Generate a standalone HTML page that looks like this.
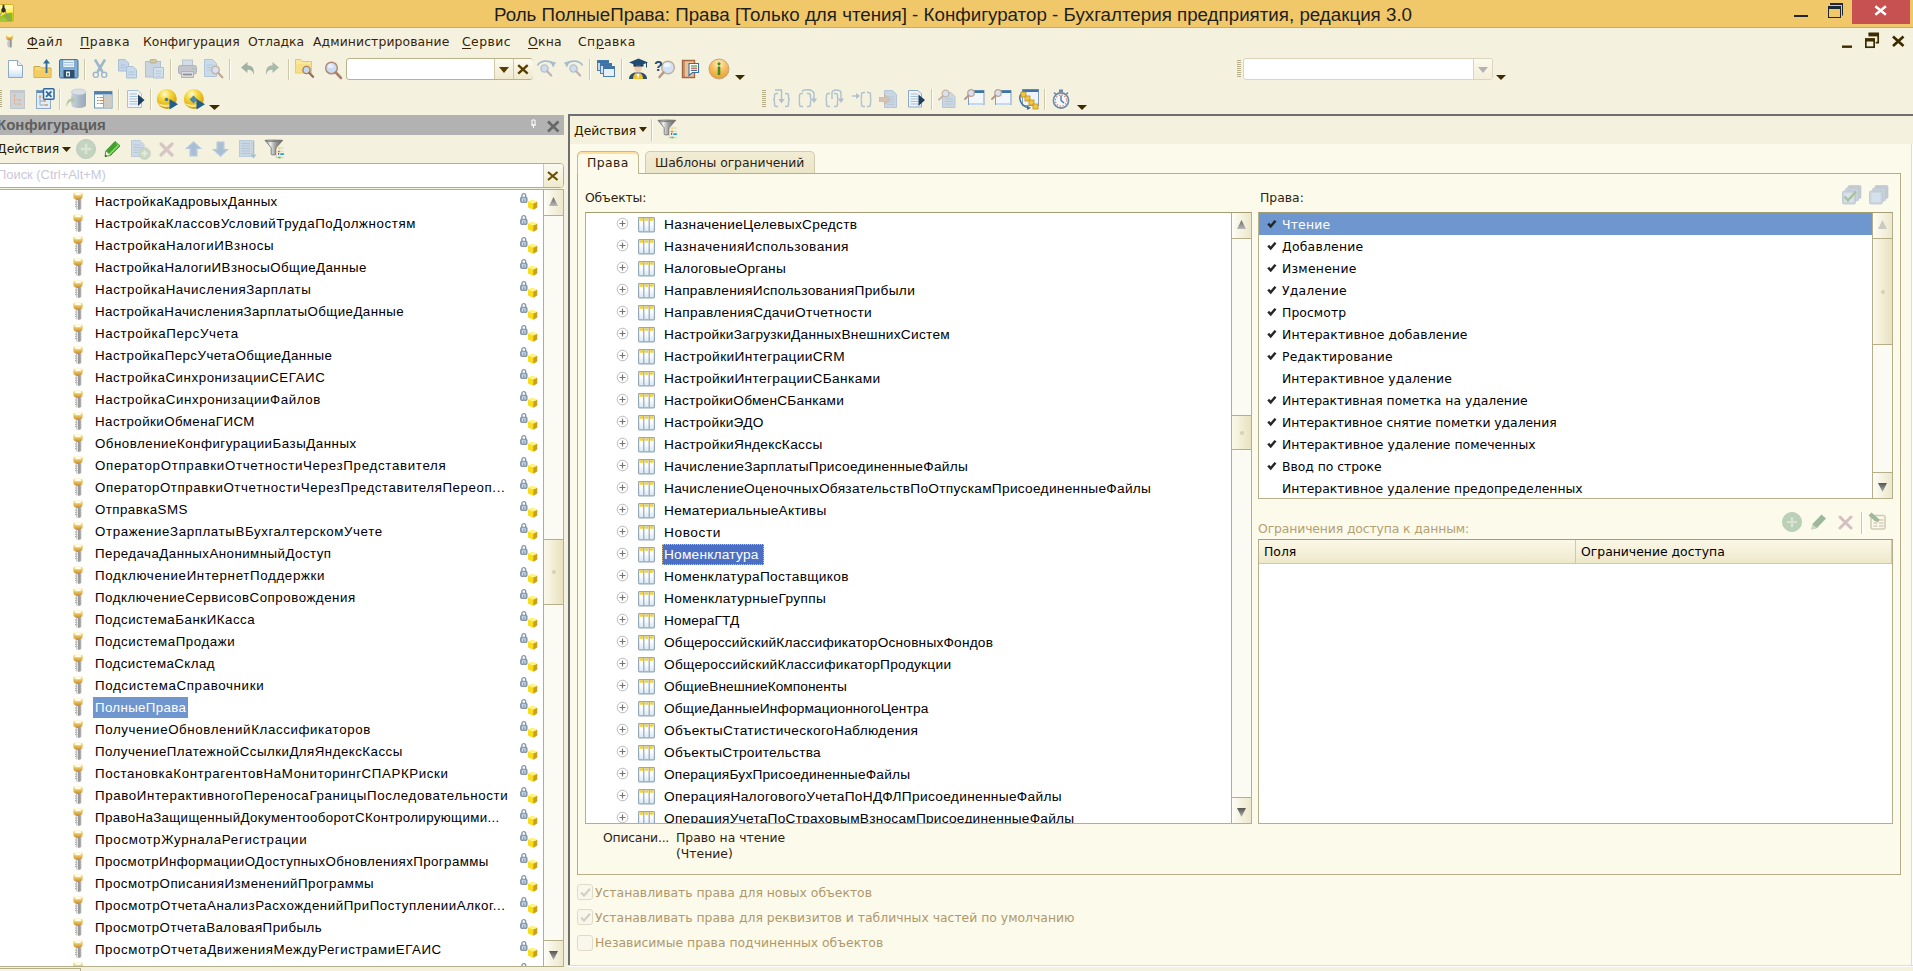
<!DOCTYPE html>
<html lang="ru"><head><meta charset="utf-8"><title>Конфигуратор</title>
<style>
html,body{margin:0;padding:0}
body{width:1913px;height:971px;overflow:hidden;position:relative;background:#F4F2DF;font-family:"Liberation Sans",sans-serif;font-size:14.3px;color:#000;line-height:1}
div,span,svg{position:absolute;box-sizing:border-box}
span{white-space:nowrap}
#defs{width:0;height:0;overflow:hidden}
/* title */
#title{left:0;top:0;width:1913px;height:28px;background:#F0C869;border-bottom:1px solid #CFAC56}
#title .cap{left:0;width:1906px;top:4px;text-align:center;font-size:18.75px;color:#1E1E1E;line-height:22px;height:22px}
#closebtn{left:1852px;top:0;width:58px;height:24px;background:#C75050}
/* menu */
#menu{left:0;top:28px;width:1913px;height:27px;background:#F4F2DF}
#menu span{top:6px;font-family:"DejaVu Sans","Liberation Sans",sans-serif;font-size:12.4px;color:#3A2208;line-height:16px}
#menu u{text-decoration:underline;text-underline-offset:2px}
/* toolbars */
#tb1{left:0;top:55px;width:1913px;height:30px;background:#F4F2DF}
#tb2{left:0;top:85px;width:1913px;height:29px;background:#F4F2DF}
.sep{width:1px;background:#CFC9AA;box-shadow:1px 0 0 #FFFEF6}
.inp{background:#fff;border:1px solid #C4BFA3;border-radius:3px}
/* left panel */
#lhead{left:0;top:115px;width:564px;height:20px;background:#B2B2B2}
#lhead .t{left:-3px;top:2px;font-weight:bold;font-size:15px;color:#5E5E5E;line-height:16px}
#ltb{left:0;top:135px;width:563px;height:28px;background:#F4F2DF}
#lsearch{left:-4px;top:163px;width:568px;height:25px;background:#fff;border:1px solid #B5AE88;border-radius:4px;overflow:hidden}
#lsearch span{left:0px;top:3px;font-size:12.9px;color:#C9C9D9;line-height:16px}
#lsx{left:546px;top:0;width:20px;height:23px;border-left:1px solid #CFC9A8;background:linear-gradient(#FCFBF2,#EFEACF)}
#llist{left:-4px;top:189px;width:568px;height:778px;background:#fff;border:1px solid #B5AE88;overflow:hidden}
.lrow{left:3px;width:543px;height:22px}
.lrow .key{left:72px;top:2px}
.lrow .lt{left:93px;top:1px;height:21px;padding:0 2px;font-size:13.3px;line-height:21px;color:#000}
.lrow .lt.sel{background:#7096CF;color:#fff}
.lrow .lock{left:518px;top:2px}
.vsb{background:#FBFAF3;border-left:1px solid #B5AE88}
.sbtn{left:0;width:100%;height:26px;background:linear-gradient(90deg,#FEFDF8,#F3EFDA 60%,#ECE7CD)}
.sbtn.up{border-bottom:1px solid #B5AE88}
.sbtn.dn{border-top:1px solid #B5AE88}
.sthumb{left:0;width:100%;border-top:1px solid #B5AE88;border-bottom:1px solid #B5AE88;background:linear-gradient(90deg,#FAF8EA,#F1ECD2 55%,#E8E2C0)}
.sthumb:after{content:"";position:absolute;left:50%;top:50%;width:4px;height:4px;margin:-2px 0 0 -2px;border-radius:2px;background:#D6D0B4}
/* splitter */
#split{left:564px;top:115px;width:4px;height:856px;background:#F4F2DF}
/* right */
#rtop{left:568px;top:114px;width:1345px;height:2px;background:#6E6E6E}
#rleft{left:568px;top:114px;width:2px;height:852px;background:#6E6E6E}
#rright{left:1911px;top:116px;width:2px;height:851px;background:#fff;border-left:1px solid #DDDCD8}
#rbot{left:568px;top:965px;width:1345px;height:2px;background:#fff;border-top:1px solid #DDDCD8}
#rform{left:570px;top:116px;width:1341px;height:849px;background:#FCFAEB;font-family:"DejaVu Sans","Liberation Sans",sans-serif;font-size:12.4px}
#rtb{left:0;top:0;width:1343px;height:28px;background:#F4F2DF}
.tab{border:1px solid #C8C2A0;border-bottom:none;border-radius:5px 5px 0 0;font-size:12.4px;line-height:16px;color:#2E1F10}
#tab1{left:7px;top:35px;width:62px;height:23px;background:#FCFAEB;z-index:3;border-color:#C2BB94;box-shadow:inset 0 2px 0 #FFDF9E}
#tab2{left:75px;top:35px;width:170px;height:22px;background:linear-gradient(#F1ECD4,#EBE5C8);border-color:#D2CCAE}
#tabpanel{left:7px;top:57px;width:1324px;height:702px;border:1px solid #B5AE86;background:#FCFAEB}
.lbl{font-size:12.4px;line-height:16px;color:#2E1F10}
.box{background:#fff;border:1px solid #B5AF8A;border-top-color:#A39D74;overflow:hidden}
.trow{left:0;width:640px;height:22px}
.trow .plus{left:30px;top:3px}
.trow .tbl{left:52px;top:3px}
.trow .tt{left:76px;top:1px;height:20px;padding:0 2px;line-height:20px;font-size:13.7px;font-family:"Liberation Sans",sans-serif}
.trow .tt.tsel{background:#4B6FC4;color:#fff;outline:1px dotted #D8C090;outline-offset:-1px;top:0;height:21px;line-height:22px;padding-right:5px}
.rrow{left:0;width:614px;height:22px}
.rrow.rsel{background:#6F97CF;color:#fff}
.rrow .chk{left:8px;top:6px}
.rrow .rt{left:23px;top:4px;line-height:16px;font-size:12.4px}
.th{top:0;height:24px;background:linear-gradient(#FBF8E8,#EEE8CB);border-right:1px solid #CFC9AB;border-bottom:1px solid #CFC9AB;font-size:12.4px;line-height:24px;padding-left:5px}
.cb{width:16px;height:16px;border:1px solid #DEDAC6;border-radius:3px;background:#F9F7EB}
.cb svg{left:2px;top:3px}
.cbl{font-size:12.4px;line-height:16px;color:#B0986A}
#bottom{left:0;top:967px;width:1913px;height:4px;background:#F4F1DE}
#btab{left:-1px;top:968px;width:82px;height:6px;border:1px solid #B5AE88;background:#F8F6EA}
#icons,#icons2{left:0;top:0;width:0;height:0}
.grip{width:4px;background:repeating-linear-gradient(#B8AE86 0 1px,transparent 1px 2px)}

</style></head>
<body>
<svg id="defs" width="0" height="0"><defs>
<symbol id="i-key" viewBox="0 0 12 18"><defs><linearGradient id="gkh" x1="0" y1="0" x2="0" y2="1"><stop offset="0" stop-color="#FFF3B8"/><stop offset=".4" stop-color="#EDCB63"/><stop offset=".8" stop-color="#D59E40"/><stop offset="1" stop-color="#C4853A"/></linearGradient><linearGradient id="gks" x1="0" y1="0" x2="1" y2="0"><stop offset="0" stop-color="#B5B5B5"/><stop offset=".3" stop-color="#E6E6E6"/><stop offset=".55" stop-color="#7C7C7C"/><stop offset=".8" stop-color="#BDBDBD"/><stop offset="1" stop-color="#8A8A8A"/></linearGradient></defs><path d="M4 7.200h5.200v9.800l-1.200 .800h-3l-1-.800z" fill="url(#gks)"/><path d="M3 10h1.200M3 12.300h1.200M3 14.600h1.200" stroke="#9A9A9A" stroke-width="1"/><path d="M1.100 1.700Q1.100 .4 2.500 .4H9.500Q10.900 .4 10.900 1.700L10.600 5Q10.300 7.700 6 7.900Q1.700 7.700 1.400 5Z" fill="url(#gkh)"/><ellipse cx="6" cy="2.100" rx="3.200" ry="1.200" fill="#FFFDEE"/></symbol>
<symbol id="i-lock" viewBox="0 0 20 18"><path d="M3.900 5.500V3.600a1.900 1.900 0 0 1 3.800 0V5.500" fill="none" stroke="#7F96AE" stroke-width="1.300"/><rect x="2.500" y="5.200" width="6.600" height="5.300" rx="1" fill="#90A6BD" stroke="#6B8198" stroke-width=".7"/><rect x="4" y="6.300" width="3.600" height="3" fill="#D3DFEB"/><rect x="5.400" y="7.200" width=".9" height="2" fill="#5E7389"/><path d="M9.900 9.700L14 7.700L19.200 9.700V15.500L15.300 17.700L9.900 15.500Z" fill="#F7DD1E"/><path d="M15.300 11.600L19.200 9.700V15.500L15.300 17.700Z" fill="#C9A21A"/><path d="M9.900 9.700L14 7.700L19.200 9.700L15.300 11.600Z" fill="#FFF384"/></symbol>
<symbol id="i-plus" viewBox="0 0 13 13"><circle cx="6.5" cy="6.5" r="5.3" fill="#fff" stroke="#B9B9B9" stroke-width="1"/><path d="M3.5 6.5h6M6.5 3.5v6" stroke="#777" stroke-width="1.2"/></symbol>
<symbol id="i-tbl" viewBox="0 0 17 16"><defs><linearGradient id="gtb" x1="0" y1="0" x2="0" y2="1"><stop offset=".4" stop-color="#fff"/><stop offset="1" stop-color="#D6E6F5"/></linearGradient></defs><rect x=".6" y=".6" width="15.800" height="14.300" rx=".8" fill="url(#gtb)" stroke="#94A8BA" stroke-width="1.200"/><path d="M5.800 1v13.500M11.200 1v13.500" stroke="#94A8BA" stroke-width="1.200"/><rect x="1.600" y="1.300" width="3.400" height="2.400" fill="#F5D126"/><rect x="6.800" y="1.300" width="3.400" height="2.400" fill="#F5D126"/><rect x="12" y="1.300" width="3.400" height="2.400" fill="#F5D126"/></symbol>
<symbol id="i-chk" viewBox="0 0 11 10"><path d="M1.200 4.700L3.700 7.400L8.500 1.700" fill="none" stroke="#262626" stroke-width="2.500"/></symbol>
<symbol id="i-funnel" viewBox="0 0 21 20"><defs><linearGradient id="gfun" x1="0" y1="0" x2="1" y2="0"><stop offset="0" stop-color="#7A7A7A"/><stop offset=".3" stop-color="#EFEFEF"/><stop offset=".55" stop-color="#A6A6A6"/><stop offset="1" stop-color="#5C5C5C"/></linearGradient></defs><path d="M1 1.300Q9.800 .700 18.700 1.300L12 8.800V15Q12 15.800 11 15.800H8.200Q7.200 15.800 7.200 15V8.800Z" fill="url(#gfun)" stroke="#6A6A6A" stroke-width=".8"/><path d="M1.300 1.700Q9.800 3 18.400 1.700" fill="none" stroke="#7A7A7A" stroke-width="1.100"/><path d="M12.500 10v9" stroke="#D8D5C8" stroke-width="1"/><rect x="13.800" y="8.300" width="2.400" height="1.600" fill="#F7D860"/><rect x="16.200" y="8.300" width="3.300" height="1.600" fill="#DEDCD0"/><rect x="13.800" y="11.700" width="2.400" height="1.600" fill="#C98A52"/><rect x="16.200" y="11.700" width="3.300" height="1.200" fill="#DEDCD0"/><rect x="14" y="14" width="1.200" height="1.800" fill="#5A5E6E"/><rect x="16" y="14.200" width="4.200" height="1.700" rx=".8" fill="#1FA0DC"/><rect x="11.800" y="17.700" width="2.600" height="1.600" fill="#CFCDC2"/><rect x="14.200" y="17.700" width="2.600" height="1.600" fill="#74AE48"/><rect x="16.800" y="17.700" width="2.900" height="1.600" fill="#DEDCD0"/></symbol>
<symbol id="i-addc" viewBox="0 0 20 20"><circle cx="10" cy="10" r="9.600" fill="#C3D3BE" stroke="#B9C8BC" stroke-width=".8"/><path d="M4.800 10h10.400M10 4.800v10.400" stroke="#DCE4D8" stroke-width="2.400"/></symbol>
<symbol id="i-sup" viewBox="0 0 10 9" preserveAspectRatio="none"><defs><linearGradient id="gsu" x1="0" y1="0" x2="0" y2="1"><stop offset="0" stop-color="#666"/><stop offset="1" stop-color="#B8B8B8"/></linearGradient></defs><path d="M5 0L10 9H0z" fill="url(#gsu)"/></symbol>
<symbol id="i-sdn" viewBox="0 0 10 9" preserveAspectRatio="none"><defs><linearGradient id="gsd" x1="0" y1="0" x2="0" y2="1"><stop offset="0" stop-color="#555"/><stop offset="1" stop-color="#B0B0B0"/></linearGradient></defs><path d="M5 9L10 0H0z" fill="url(#gsd)"/></symbol>
<symbol id="i-supd" viewBox="0 0 10 9" preserveAspectRatio="none"><path d="M5 0L10 9H0z" fill="#CBCAC0"/></symbol>
<symbol id="i-up" viewBox="0 0 10 8" preserveAspectRatio="none"><path d="M5 0 L10 8 H0z"/></symbol>
<symbol id="i-dn" viewBox="0 0 10 8" preserveAspectRatio="none"><path d="M5 8 L10 0 H0z"/></symbol>
</defs></svg>

<div id="title"><span class="cap">Роль ПолныеПрава: Права [Только для чтения] - Конфигуратор - Бухгалтерия предприятия, редакция 3.0</span>
<svg style="left:-6px;top:4px" width="20" height="18" viewBox="0 0 20 18"><defs><linearGradient id="gapp" x1="0" y1="0" x2="0" y2="1"><stop offset="0" stop-color="#FFF9CC"/><stop offset=".5" stop-color="#FFEC3A"/><stop offset="1" stop-color="#F2D21E"/></linearGradient></defs><rect x=".5" y=".5" width="19" height="17" rx="1.800" fill="url(#gapp)" stroke="#D6B21E"/><path d="M1 15.500L12 9.500l6.500-1v8.500H1z" fill="#8DB822"/><path d="M1 17L9 12l4 3.500v1.500z" fill="#A7C93A" opacity=".8"/><path d="M9.500 4.500L6 11.500M10 4.500l5.500 12.500" stroke="#9A9A9A" stroke-width="1.100"/><path d="M8.700 .800h1.600l.3 3 1 1.500v2.200l-2.100 1.200-2.100-1.200V5.300l1-1.500z" fill="#2A2D33"/></svg>
<div id="closebtn"></div>
<svg style="left:1790px;top:0" width="123" height="28"><rect x="4" y="15" width="14" height="2" fill="#1E2533"/><path d="M40.5 4.5h12v11" fill="none" stroke="#1E2533" stroke-width="1"/><rect x="40" y="3" width="13" height="2" fill="#1E2533"/><rect x="38.5" y="7.5" width="12" height="10" fill="none" stroke="#1E2533" stroke-width="1"/><rect x="38" y="6" width="13" height="3" fill="#1E2533"/><path d="M85.3 6.3l10.600 8.400M95.900 6.300l-10.600 8.400" stroke="#fff" stroke-width="2.500"/></svg>
</div>

<div id="menu">
<svg style="left:5px;top:6px" width="9" height="14"><use href="#i-key"/></svg>
<span style="left:27px;letter-spacing:.4px"><u>Ф</u>айл</span>
<span style="left:80px;letter-spacing:.5px"><u>П</u>равка</span>
<span style="left:143px;letter-spacing:.02px">Конфигурация</span>
<span style="left:248px">Отладка</span>
<span style="left:313px;letter-spacing:.1px">Администрирование</span>
<span style="left:462px;letter-spacing:.45px"><u>С</u>ервис</span>
<span style="left:528px;letter-spacing:.2px"><u>О</u>кна</span>
<span style="left:578px;letter-spacing:.45px">Сп<u>р</u>авка</span>
<svg style="left:1838px;top:0px" width="72" height="24"><rect x="4" y="17.500" width="10" height="2.400" fill="#3D2B00"/><path d="M30.500 5.300h9.700v9.300h-2.500" fill="none" stroke="#3D2B00" stroke-width="1.700"/><rect x="30.500" y="5.300" width="9.700" height="3.100" fill="#3D2B00"/><rect x="27.850" y="11.200" width="8.300" height="8.000" fill="#F4F2DF" stroke="#3D2B00" stroke-width="1.700"/><rect x="27" y="10.300" width="10" height="3.200" fill="#3D2B00"/><path d="M55 8.500l10.500 9.500M65.500 8.500l-10.500 9.500" stroke="#3D2B00" stroke-width="2.700"/></svg>
</div>

<div id="tb1"></div><div id="tb2"></div>
<div id="icons">
<!-- row1 -->
<svg style="left:7px;top:59px" width="17" height="20" viewBox="0 0 17 20"><defs><linearGradient id="gdoc" x1="0" y1="0" x2="0" y2="1"><stop offset=".45" stop-color="#fff"/><stop offset="1" stop-color="#C5DDF2"/></linearGradient></defs><path d="M1.5 1.5h9l5 5v12h-14z" fill="url(#gdoc)" stroke="#8FA9C2"/><path d="M10.5 1.5v5h5" fill="#E9F1F8" stroke="#8FA9C2"/></svg>
<svg style="left:33px;top:58px" width="19" height="21" viewBox="0 0 19 21"><path d="M1 8.5h6l1.5 1.5h9.5v9.5h-17z" fill="#F6D879" stroke="#C9A545"/><path d="M1 12h17v7.5h-17z" fill="#F2C95A" opacity=".7"/><path d="M13.5 15V4" stroke="#2F6E9C" stroke-width="1.8"/><path d="M10 5.5l3.5-4.5 3.5 4.500z" fill="#2F6E9C"/></svg>
<svg style="left:59px;top:59px" width="20" height="20" viewBox="0 0 20 20"><rect x=".5" y=".5" width="18.500" height="18.500" rx="1.500" fill="#7FAFD6" stroke="#3F6F98"/><rect x="4" y="1" width="11.500" height="7.500" fill="#EAF3FA" stroke="#5E8FB8" stroke-width=".6"/><path d="M5 3.500h9.500M5 6h9.500" stroke="#9CC0DF" stroke-width="1"/><rect x="4.500" y="11" width="11" height="8" fill="#2E506F"/><rect x="7" y="12.500" width="4" height="5" fill="#E8EEF4"/><rect x="8.200" y="14" width="1.600" height="2.500" fill="#2E506F"/></svg>
<div class="sep" style="left:84px;top:59px;height:21px"></div>
<svg style="left:92px;top:59px" width="16" height="20" viewBox="0 0 16 20"><path d="M3 0.500L10.500 13M13 0.500L5.500 13" stroke="#9DB6CE" stroke-width="2.600"/><circle cx="3.800" cy="15.800" r="2.600" fill="#F4F2DF" stroke="#9DB6CE" stroke-width="1.400"/><circle cx="12.200" cy="15.800" r="2.600" fill="#F4F2DF" stroke="#9DB6CE" stroke-width="1.400"/></svg>
<svg style="left:118px;top:59px" width="20" height="20" viewBox="0 0 20 20"><path d="M.5.5h6.500l3.500 3.500v8h-10z" fill="#C3D5E6" stroke="#A9C0D6"/><path d="M8.500 7.500h6.500l3.500 3.500v8h-10z" fill="#C9DAE9" stroke="#A9C0D6"/><path d="M10.500 13h6M10.500 15.500h6M2.500 6h5M2.500 8.500h5" stroke="#A9C0D6" stroke-width=".8"/></svg>
<svg style="left:145px;top:59px" width="20" height="20" viewBox="0 0 20 20"><rect x=".5" y="2.500" width="15" height="15.500" fill="#C9D6E2" stroke="#AFC2D3"/><rect x="5" y=".5" width="6.500" height="3.500" rx="1" fill="#CFC9A8" stroke="#B8B295"/><path d="M8.500 8.500h10v10.500h-10z" fill="#D3E1EE" stroke="#AFC2D3"/><path d="M10.500 12h6M10.500 14.500h6M10.500 17h6" stroke="#AFC2D3" stroke-width=".8"/></svg>
<div class="sep" style="left:170px;top:59px;height:21px"></div>
<svg style="left:178px;top:59px" width="19" height="20" viewBox="0 0 19 20"><rect x="4.500" y="1" width="10" height="6" fill="#D3DDE6" stroke="#B9C3CD"/><rect x=".5" y="6.500" width="18" height="8.500" rx="2" fill="#C3C4CC" stroke="#B0B1BA"/><rect x="3.500" y="12.500" width="12" height="6" fill="#D9D9DE" stroke="#B0B1BA"/><path d="M5 15.500h9" stroke="#8E8E96" stroke-width="1.600"/><rect x="14" y="9" width="2" height="1.300" fill="#9CC79C"/></svg>
<svg style="left:204px;top:59px" width="20" height="20" viewBox="0 0 20 20"><path d="M.5.5h8l4 4v13h-12z" fill="#CADBEA" stroke="#AFC4D8"/><path d="M2.500 6h7M2.500 8.500h5M2.500 11h4" stroke="#AFC4D8" stroke-width=".8"/><circle cx="11.500" cy="11" r="3.800" fill="#D5E3F2" stroke="#C9B3A6" stroke-width="1.500"/><path d="M14.300 14l4 4.300" stroke="#C2A99B" stroke-width="2.400" stroke-linecap="round"/></svg>
<div class="sep" style="left:229px;top:59px;height:21px"></div>
<svg style="left:241px;top:62px" width="14" height="14" viewBox="0 0 14 14"><path d="M0 5.500L6.500 0v3.300c5 0 7 3.500 6.500 10-1-4-2.500-5.500-6.500-5.500V11z" fill="#9FB2A3"/></svg>
<svg style="left:265px;top:62px" width="14" height="14" viewBox="0 0 14 14"><path d="M14 5.500L7.500 0v3.300c-5 0-7 3.500-6.500 10 1-4 2.500-5.500 6.500-5.500V11z" fill="#A9B9AB"/></svg>
<div class="sep" style="left:288px;top:59px;height:21px"></div>
<svg style="left:295px;top:58px" width="20" height="21" viewBox="0 0 20 21"><path d="M.5 1.500h5.500l1.500 2h9v11.500h-16z" fill="#F9E79C" stroke="#E2C766"/><path d="M.5 6h16v9h-16z" fill="#F5DA7A" opacity=".6"/><circle cx="11.500" cy="12" r="3.600" fill="#C5D9F0" stroke="#A87F68" stroke-width="1.400"/><path d="M14.200 14.800l3.800 4" stroke="#9A6B55" stroke-width="2.300" stroke-linecap="round"/></svg>
<svg style="left:324px;top:61px" width="19" height="19" viewBox="0 0 19 19"><circle cx="7.500" cy="7" r="5.800" fill="#C9DCF3" stroke="#B28C78" stroke-width="1.500"/><ellipse cx="6.500" cy="5" rx="3" ry="2" fill="#E6F0FB"/><path d="M11.800 11.500l5.200 5.500" stroke="#A9806B" stroke-width="2.600" stroke-linecap="round"/></svg>
<div class="inp" style="left:346px;top:58px;width:187px;height:22px;border-color:#B9B38B"><div style="left:147px;top:0;width:39px;height:20px;background:linear-gradient(#FCFAEE,#EFE9CE);border-left:1px solid #CFC9A8;border-radius:0 3px 3px 0"></div><div style="left:166px;top:0;width:1px;height:20px;background:#CFC9A8"></div>
<svg style="left:152px;top:8px;fill:#5A3E00" width="10" height="6"><use href="#i-dn"/></svg>
<svg style="left:170px;top:5px" width="12" height="11"><path d="M1.200 1.200l9.500 8.500M10.700 1.200l-9.500 8.500" stroke="#5A3E00" stroke-width="2.400"/></svg></div>
<svg style="left:536px;top:59px" width="21" height="19" viewBox="0 0 21 19"><path d="M1.500 6.500C4 1.500 13 0.500 17.500 5" fill="none" stroke="#A9BCCD" stroke-width="1.800"/><path d="M14 2l6 1.500-3 5z" fill="#A9BCCD"/><circle cx="8.500" cy="9.500" r="3.600" fill="#CFDDED" stroke="#B5BFCC" stroke-width="1.400"/><path d="M11.200 12.300l4 4.200" stroke="#BDB5B5" stroke-width="2.300" stroke-linecap="round"/></svg>
<svg style="left:563px;top:59px" width="21" height="19" viewBox="0 0 21 19"><path d="M19.500 6.500C17 1.500 8 0.500 3.500 5" fill="none" stroke="#A9BCCD" stroke-width="1.800"/><path d="M7 2l-6 1.500 3 5z" fill="#A9BCCD"/><circle cx="10.500" cy="9.500" r="3.600" fill="#CFDDED" stroke="#B5BFCC" stroke-width="1.400"/><path d="M13.200 12.300l4 4.200" stroke="#BDB5B5" stroke-width="2.300" stroke-linecap="round"/></svg>
<div class="sep" style="left:589px;top:59px;height:21px"></div>
<svg style="left:597px;top:60px" width="19" height="18" viewBox="0 0 19 18"><rect x=".5" y=".5" width="11" height="10" fill="#C5D9EC" stroke="#4C7FAD"/><rect x=".5" y=".5" width="11" height="2.500" fill="#3F73A3"/><rect x="3.500" y="3.500" width="11" height="10" fill="#D4E4F2" stroke="#4C7FAD"/><rect x="3.500" y="3.500" width="11" height="2.500" fill="#3F73A3"/><rect x="6.500" y="6.500" width="11" height="10" fill="#E6F0F8" stroke="#4C7FAD"/><rect x="6.500" y="6.500" width="11" height="2.500" fill="#3F73A3"/></svg>
<div class="sep" style="left:621px;top:59px;height:21px"></div>
<svg style="left:628px;top:58px" width="21" height="22" viewBox="0 0 21 22"><path d="M1 21c0-4 3-6 6-6.500h6c3 .5 6 2.500 6 6.500z" fill="#2D4F6E"/><path d="M5 21c0-3 1-5 3-6l2 2 2-2c2 1 3 3 3 6z" fill="#F2C230"/><path d="M8.500 15.500l1.500 5.500 1.500-5.500z" fill="#fff"/><ellipse cx="10" cy="9.500" rx="4" ry="4.800" fill="#F1CDAA"/><path d="M6 8c1-3 7-3 8 0l.5-2.500h-9z" fill="#5A4030"/><path d="M1 4.500L10.500.5 20 4.500 10.500 8z" fill="#1F4A73"/><path d="M5.500 6v2.500h10V6l-5 2z" fill="#173A5C"/><path d="M18.500 4.500v5" stroke="#1F4A73" stroke-width="1"/></svg>
<svg style="left:654px;top:59px" width="22" height="20" viewBox="0 0 22 20"><circle cx="14" cy="8.500" r="6.300" fill="#D3E3F5" stroke="#C6AD99" stroke-width="1.500"/><ellipse cx="13" cy="6" rx="3.500" ry="2.200" fill="#EEF5FC"/><path d="M9.500 13.500l-4 4.500" stroke="#B59A86" stroke-width="2.600" stroke-linecap="round"/><text x="0" y="11.500" font-family="Liberation Sans,sans-serif" font-weight="bold" font-size="14.500" fill="#1F4A73">?</text></svg>
<svg style="left:681px;top:59px" width="19" height="20" viewBox="0 0 19 20"><path d="M1.500 1.500h12v17h-12z" fill="#E8C29C" stroke="#A8683F" stroke-width="1.400"/><path d="M3 1.500v17" stroke="#A8683F" stroke-width="1"/><path d="M8 4.500h9.500v9h-6l-3.500 3z" fill="#fff" stroke="#3E6FA0" stroke-width="1.100"/><path d="M10 7h6" stroke="#4E9A3E" stroke-width="1.200"/><path d="M10 9.200h6" stroke="#D04A3A" stroke-width="1.200"/><path d="M10 11.400h6" stroke="#3E6FA0" stroke-width="1.200"/></svg>
<svg style="left:708px;top:58px" width="22" height="22" viewBox="0 0 22 22"><defs><radialGradient id="ginfo" cx=".5" cy=".25" r=".8"><stop offset="0" stop-color="#FFF0C8"/><stop offset=".45" stop-color="#F8C060"/><stop offset="1" stop-color="#E59A28"/></radialGradient></defs><circle cx="11" cy="11" r="10" fill="url(#ginfo)" stroke="#C9A880" stroke-width="1"/><circle cx="11" cy="5.800" r="1.600" fill="#3E8A1E"/><rect x="9.700" y="8.500" width="2.600" height="8.500" rx=".6" fill="#3E8A1E"/></svg>
<svg style="left:735px;top:75px;fill:#3D2B00" width="10" height="5"><use href="#i-dn"/></svg>
<!-- right search -->
<div class="grip" style="left:1237px;top:60px;height:18px"></div>
<div class="inp" style="left:1243px;top:58px;width:250px;height:22px;border-color:#DAD5BC"><div style="left:229px;top:0;width:19px;height:20px;background:linear-gradient(#FCFAEE,#F3EED8);border-left:1px solid #DAD5BC;border-radius:0 3px 3px 0"></div><svg style="left:234px;top:8px;fill:#B4B4B4" width="10" height="6"><use href="#i-dn"/></svg></div>
<svg style="left:1496px;top:75px;fill:#3D2B00" width="10" height="5"><use href="#i-dn"/></svg>
<!-- row2 left -->
<div class="grip" style="left:-2px;top:90px;height:18px"></div>
<svg style="left:10px;top:90px" width="15" height="19" viewBox="0 0 15 19"><rect x=".5" y=".5" width="14" height="18" fill="#CFD3D5" stroke="#C2C7CA"/><rect x=".5" y=".5" width="14" height="2.500" fill="#C2C9CE"/><path d="M4.500 6v8h4M4.500 10h4" fill="none" stroke="#D9B9A3" stroke-width="1"/><rect x="3.500" y="4.500" width="2.200" height="2" fill="#E0B79B"/><rect x="8.500" y="9" width="2.200" height="2" fill="#E0B79B"/><rect x="8.500" y="13" width="2.200" height="2" fill="#E0B79B"/></svg>
<svg style="left:36px;top:88px" width="19" height="21" viewBox="0 0 19 21"><rect x=".5" y="2.500" width="14" height="18" fill="#E3EDF6" stroke="#8FAAC4"/><rect x=".5" y="2.500" width="14" height="2.500" fill="#5E8DB8"/><path d="M4 9v8h6M4 13h4" fill="none" stroke="#8FAAC4" stroke-width="1"/><rect x="3" y="7.500" width="2.200" height="2" fill="#E09A6B"/><rect x="9.500" y="16" width="2.200" height="2" fill="#E09A6B"/><rect x="7.500" y="12" width="2.200" height="2" fill="#E09A6B"/><rect x="7.500" y=".75" width="10.500" height="10.500" rx="1" fill="#EAF2FA" stroke="#2F6A9E" stroke-width="1.500"/><path d="M10 3.300l5.500 5.500M15.500 3.300l-5.500 5.500" stroke="#2F6A9E" stroke-width="1.900"/></svg>
<div class="sep" style="left:59px;top:89px;height:21px"></div>
<svg style="left:65px;top:88px" width="22" height="21" viewBox="0 0 22 21"><defs><linearGradient id="gcyl" x1="0" y1="0" x2="1" y2="0"><stop offset="0" stop-color="#C9D3DD"/><stop offset=".6" stop-color="#A9B7C5"/><stop offset="1" stop-color="#9AA9B8"/></linearGradient></defs><path d="M6.500 4v13c0 1.800 3.300 3 7.200 3s7.300-1.200 7.300-3V4z" fill="url(#gcyl)"/><ellipse cx="13.750" cy="4" rx="7.250" ry="3" fill="#D7DFE7" stroke="#B5C1CD" stroke-width=".6"/><path d="M1.500 19c-.5-5 1.500-8 5-8.500V8l4 4-4 4v-2.500c-2.500 0-4 2-5 5.500z" fill="#B2C8AE"/></svg>
<svg style="left:94px;top:91px" width="19" height="18" viewBox="0 0 19 18"><rect x=".5" y=".5" width="17.500" height="16.500" fill="#fff" stroke="#6C93B8"/><rect x=".5" y=".5" width="17.500" height="3" fill="#4C7FB0"/><rect x="10" y="4" width="7.500" height="12.500" fill="#CDCBC3"/><path d="M5.500 6.500h3.500M5.500 9.500h3.500M5.500 12.500h3.500" stroke="#E08A4A" stroke-width="1.100"/><path d="M3 6.500h1.500M3 9.500h1.500M3 12.500h1.500" stroke="#6C93B8" stroke-width="1.100"/><path d="M9.500 4v12.500" stroke="#6C93B8" stroke-width=".8"/></svg>
<div class="sep" style="left:118px;top:89px;height:21px"></div>
<svg style="left:127px;top:90px" width="19" height="19" viewBox="0 0 19 19"><path d="M.5.5h10.500l3.500 3.500v13.500h-14z" fill="#EEF4FA" stroke="#A9C0D6"/><path d="M2.500 4h7.500M2.500 6.500h8M2.500 9h8M2.500 11.500h8M2.500 14h8" stroke="#A9C0D6" stroke-width="1"/><path d="M11 4.500l6.500 5.500L11 16z" fill="#1F3F5F"/></svg>
<div class="sep" style="left:150px;top:89px;height:21px"></div>
<svg style="left:156px;top:88px" width="23" height="22" viewBox="0 0 23 22"><defs><radialGradient id="gball" cx=".4" cy=".25" r=".85"><stop offset="0" stop-color="#FFFBD8"/><stop offset=".3" stop-color="#F8DC48"/><stop offset=".7" stop-color="#E2B010"/><stop offset="1" stop-color="#B88A08"/></radialGradient></defs><circle cx="10.800" cy="11" r="10" fill="url(#gball)"/><path d="M2 15c3 5 13 6 17.500-1-3 3-12 4-17.500 1z" fill="#FFF4B0" opacity=".8"/><circle cx="10.500" cy="11.500" r="1.800" fill="#3E7FA8"/><path d="M13.500 11v10.500l8.500-5.200z" fill="#1F5E8E"/></svg>
<svg style="left:183px;top:88px" width="23" height="22" viewBox="0 0 23 22"><circle cx="10.800" cy="11" r="10" fill="url(#gball)"/><path d="M2 15c3 5 13 6 17.500-1-3 3-12 4-17.500 1z" fill="#FFF4B0" opacity=".8"/><path d="M10.500 7.500l4 4-4 4-4-4z" fill="#4E87A8"/><path d="M13.500 11v10.500l8.500-5.200z" fill="#1F5E8E"/></svg>
<svg style="left:209px;top:105px;fill:#3D2B00" width="11" height="5"><use href="#i-dn"/></svg>
</div>

<div id="icons2">
<div class="grip" style="left:762px;top:90px;height:18px"></div>
<svg style="left:772px;top:89px" width="19" height="20" viewBox="0 0 19 20" fill="none" stroke="#AFC0CF" stroke-width="1.400"><path d="M6 4.500h-1.500c-1.500 0-2 1-2 2v2c0 1-.5 2-1.500 2 1 0 1.500 1 1.500 2v3c0 1 .5 2 2 2H6"/><path d="M13 4.500h1.500c1.500 0 2 1 2 2v2c0 1 .5 2 1.500 2-1 0-1.500 1-1.500 2v3c0 1-.5 2-2 2H13"/><path d="M3 1h6.500v10"/><path d="M6.300 10l3.200 4.500 3.200-4.500z" fill="#AFC0CF" stroke="none"/></svg>
<svg style="left:798px;top:89px" width="20" height="20" viewBox="0 0 20 20" fill="none" stroke="#AFC0CF" stroke-width="1.400"><path d="M5 4.500h-1.500c-1.500 0-2 1-2 2v2c0 1-.5 2-1 2 .5 0 1 1 1 2v3c0 1 .5 2 2 2H5"/><path d="M9 4.500h1.500c1.500 0 2 1 2 2v2c0 1 .5 2 1 2-.5 0-1 1-1 2v3c0 1-.5 2-2 2H9"/><path d="M4 2.500c2-2.500 10-2.500 12 1.500v7"/><path d="M12.800 9.500l3.200 4.500 3.200-4.500z" fill="#AFC0CF" stroke="none"/></svg>
<svg style="left:825px;top:89px" width="20" height="20" viewBox="0 0 20 20" fill="none" stroke="#AFC0CF" stroke-width="1.400"><path d="M5 4.500h-1.500c-1.500 0-2 1-2 2v2c0 1-.5 2-1 2 .5 0 1 1 1 2v3c0 1 .5 2 2 2H5"/><path d="M9 4.500h1.500c1.500 0 2 1 2 2v2c0 1 .5 2 1 2-.5 0-1 1-1 2v3c0 1-.5 2-2 2H9"/><path d="M7 10V4c0-4 9-4 9 0v7"/><path d="M12.800 9.500l3.200 4.500 3.200-4.500z" fill="#AFC0CF" stroke="none"/></svg>
<svg style="left:852px;top:89px" width="20" height="20" viewBox="0 0 20 20" fill="none" stroke="#AFC0CF" stroke-width="1.400"><path d="M0 7h5"/><path d="M4 4l4 3-4 3z" fill="#AFC0CF" stroke="none"/><path d="M13 3.500h-1.500c-1.500 0-2 1-2 2v3c0 1-.5 2-1 2 .5 0 1 1 1 2v3c0 1 .5 2 2 2H13"/><path d="M15 3.500h1.500c1.500 0 2 1 2 2v3c0 1 .5 2 1 2-.5 0-1 1-1 2v3c0 1-.5 2-2 2H15"/></svg>
<svg style="left:879px;top:90px" width="19" height="18" viewBox="0 0 19 18"><path d="M5.500.5h8l4 4v13h-12z" fill="#C9D6E2" stroke="#B5C5D4"/><path d="M8 7h7M8 9.500h7M8 12h7M8 14.500h7" stroke="#B5C5D4" stroke-width=".9"/><path d="M0 7.500h5.500V4.500l5.500 5-5.500 5v-3H0z" fill="#D3C3B5" stroke="#C2B0A0" stroke-width=".6"/></svg>
<svg style="left:908px;top:90px" width="18" height="18" viewBox="0 0 18 18"><path d="M.5.500h9.500l3.500 3.500v13h-13z" fill="#EEF4FA" stroke="#8FAAC4"/><path d="M2.500 4h7M2.500 6.500h8M2.500 9h8M2.500 11.500h8M2.500 14h8" stroke="#A9C0D6" stroke-width="1"/><path d="M10.500 4.500l6.500 5.500-6.500 6z" fill="#1F3F5F"/></svg>
<div class="sep" style="left:931px;top:89px;height:21px"></div>
<svg style="left:938px;top:89px" width="19" height="19" viewBox="0 0 19 19"><path d="M4.500 3.500h8.500l4 4v11h-12.500z" fill="#CAD7E3" stroke="#B5C5D4"/><path d="M7 10h8M7 12.500h8M7 15h8" stroke="#B5C5D4" stroke-width=".9"/><circle cx="7.500" cy="4.500" r="3.300" fill="#D9E3EF" stroke="#C8B5AA" stroke-width="1.300"/><path d="M5 7l-4 3.500" stroke="#C8B5AA" stroke-width="2" stroke-linecap="round"/></svg>
<svg style="left:964px;top:88px" width="21" height="18" viewBox="0 0 21 18"><rect x="4.500" y="2.500" width="15.500" height="14" fill="#F3F7FB" stroke="#7FA0C0"/><rect x="4.500" y="2.500" width="15.500" height="2.500" fill="#3F73A3"/><path d="M5 16l14.500 0" stroke="#C5D9EC" stroke-width="2"/><circle cx="7" cy="5" r="3.300" fill="#D5E2F2" stroke="#C2A594" stroke-width="1.300"/><path d="M4.500 7.500l-3.500 3.500" stroke="#B89888" stroke-width="2" stroke-linecap="round"/></svg>
<svg style="left:991px;top:88px" width="21" height="18" viewBox="0 0 21 18"><rect x="4.500" y="2.500" width="15.500" height="14" fill="#F3F7FB" stroke="#7FA0C0"/><rect x="4.500" y="2.500" width="15.500" height="2.500" fill="#3F73A3"/><path d="M5 16l14.500 0" stroke="#C5D9EC" stroke-width="2"/><circle cx="7" cy="5" r="3.300" fill="#D5E2F2" stroke="#C2A594" stroke-width="1.300"/><path d="M4.500 7.500l-3.500 3.500" stroke="#B89888" stroke-width="2" stroke-linecap="round"/></svg>
<svg style="left:1018px;top:88px" width="22" height="22" viewBox="0 0 22 22"><rect x="4.500" y="1.500" width="16" height="16" fill="#EEF4FA" stroke="#7FA0C0"/><rect x="4.500" y="1.500" width="16" height="2.500" fill="#3F73A3"/><path d="M3 6c-3 5 0 12 8 14" fill="none" stroke="#3F73A3" stroke-width="1.500"/><path d="M9 17.500l4 2.500-4 2z" fill="#3F73A3"/><rect x="3" y="4" width="5" height="5" fill="#F5C83A" stroke="#B8902A" stroke-width=".8"/><rect x="7" y="8" width="5" height="5" fill="#F5C83A" stroke="#B8902A" stroke-width=".8"/><rect x="11" y="12" width="5" height="5" fill="#F5C83A" stroke="#B8902A" stroke-width=".8"/><rect x="15" y="16" width="5" height="5" fill="#F5C83A" stroke="#B8902A" stroke-width=".8"/></svg>
<div class="sep" style="left:1044px;top:89px;height:21px"></div>
<svg style="left:1051px;top:89px" width="20" height="20" viewBox="0 0 20 20"><rect x="8" y=".5" width="4" height="2.500" fill="#6C8AA5"/><path d="M3 3.500l2 2M17 3.500l-2 2" stroke="#6C8AA5" stroke-width="1.600"/><circle cx="10" cy="11.500" r="7.600" fill="#F4F8FC" stroke="#6C8AA5" stroke-width="1.600"/><circle cx="10" cy="11.500" r="5.600" fill="none" stroke="#E0705A" stroke-width="1.200" stroke-dasharray="1.200 1.730"/><path d="M10 6.500v5l3 2.500" fill="none" stroke="#3F73A3" stroke-width="1.300"/></svg>
<svg style="left:1077px;top:105px;fill:#3D2B00" width="10" height="5"><use href="#i-dn"/></svg>
</div>


<div id="lhead"><span class="t">Конфигурация</span>
<svg style="left:526px;top:2px" width="36" height="16"><path d="M6 3h3v5h-3z M5 8h5 M7.5 8v3" fill="none" stroke="#fff" stroke-width="1"/><path d="M22 4.500l10.500 10M32.500 4.500l-10.500 10" stroke="#686868" stroke-width="2.700"/></svg>
</div>
<div id="ltb"><span style="left:-3px;top:6px;font-family:'DejaVu Sans','Liberation Sans',sans-serif;font-size:12.4px;line-height:16px;color:#2A1A00">Действия</span>
<svg style="left:62px;top:12px;fill:#3D2B00" width="9" height="5"><use href="#i-dn"/></svg>
<svg style="left:76px;top:4px" width="20" height="20"><use href="#i-addc"/></svg>
<svg style="left:104px;top:6px" width="17" height="16" viewBox="0 0 17 16"><path d="M11 .5l5 4.500-9.500 9.500-5.500 1 .8-5.500z" fill="#3FA52A"/><path d="M12.500 2l2.200 2-9.500 9.500" fill="none" stroke="#8EDC6E" stroke-width="1.600"/><path d="M1.800 10l4.700 4.500-5.500 1z" fill="#F5F0E0"/><path d="M1.300 13.300l2 2-2.300.700z" fill="#2A5A1E"/><path d="M11 .5l5 4.500-9.500 9.500-5.500 1 .8-5.500z" fill="none" stroke="#2E7A20" stroke-width=".7"/></svg>
<svg style="left:131px;top:5px" width="20" height="20" viewBox="0 0 20 20"><path d="M.5.500h8.500l4 4v12h-12.500z" fill="#CCD9E6" stroke="#BCCBDA"/><path d="M2.500 5h7M2.500 7.500h8M2.500 10h5M2.500 12.500h4" stroke="#B5C5D5" stroke-width=".9"/><circle cx="13.500" cy="13.500" r="5.800" fill="#C8D6C4" stroke="#BCCBBE" stroke-width=".8"/><path d="M10.300 13.500h6.400M13.500 10.300v6.400" stroke="#E3EADF" stroke-width="1.900"/></svg>
<svg style="left:159px;top:7px" width="15" height="15" viewBox="0 0 15 15"><path d="M2 2l11 11M13 2l-11 11" stroke="#D6C6C2" stroke-width="3.200" stroke-linecap="round"/></svg>
<svg style="left:185px;top:6px" width="17" height="16" viewBox="0 0 17 16"><path d="M8.500 0l8.500 8h-4.500v7.500h-8V8H0z" fill="#B3C6DA"/><path d="M8.500 2l5 5h-3v7h-4V7h-3z" fill="#A9BED4"/></svg>
<svg style="left:212px;top:6px" width="17" height="16" viewBox="0 0 17 16"><path d="M8.500 16l8.500-8h-4.500V.5h-8V8H0z" fill="#B3C6DA"/><path d="M8.500 14l5-5h-3V2h-4v7h-3z" fill="#A9BED4"/></svg>
<svg style="left:239px;top:5px" width="18" height="19" viewBox="0 0 18 19"><rect x=".5" y=".500" width="12.500" height="16" fill="#C9D6E3" stroke="#BCCBDA"/><path d="M2.500 3.500h8.500M2.500 6h8.500M2.500 8.500h8.500M2.500 11h8.500M2.500 13.500h8.500" stroke="#B3C3D3" stroke-width=".9"/><path d="M14.500 .500v15" stroke="#A9BED4" stroke-width="1.600"/><path d="M11.500 14.500h6l-3 4z" fill="#A9BED4"/></svg>
<svg style="left:264px;top:4px" width="21" height="20"><use href="#i-funnel"/></svg>
</div>
<div id="lsearch"><span>Поиск (Ctrl+Alt+M)</span><div id="lsx"><svg style="left:3px;top:7px" width="12" height="10"><path d="M1 1l9.500 8M10.500 1l-9.500 8" stroke="#6B4E00" stroke-width="2.200"/></svg></div></div>
<div id="llist">
<div class="lrow" style="top:0px"><svg class="key" width="12" height="18"><use href="#i-key"/></svg><span class="lt" style="letter-spacing:0.388px">НастройкаКадровыхДанных</span><svg class="lock" width="20" height="18"><use href="#i-lock"/></svg></div>
<div class="lrow" style="top:22px"><svg class="key" width="12" height="18"><use href="#i-key"/></svg><span class="lt" style="letter-spacing:0.59px">НастройкаКлассовУсловийТрудаПоДолжностям</span><svg class="lock" width="20" height="18"><use href="#i-lock"/></svg></div>
<div class="lrow" style="top:44px"><svg class="key" width="12" height="18"><use href="#i-key"/></svg><span class="lt" style="letter-spacing:0.62px">НастройкаНалогиИВзносы</span><svg class="lock" width="20" height="18"><use href="#i-lock"/></svg></div>
<div class="lrow" style="top:66px"><svg class="key" width="12" height="18"><use href="#i-key"/></svg><span class="lt" style="letter-spacing:0.439px">НастройкаНалогиИВзносыОбщиеДанные</span><svg class="lock" width="20" height="18"><use href="#i-lock"/></svg></div>
<div class="lrow" style="top:88px"><svg class="key" width="12" height="18"><use href="#i-key"/></svg><span class="lt" style="letter-spacing:0.576px">НастройкаНачисленияЗарплаты</span><svg class="lock" width="20" height="18"><use href="#i-lock"/></svg></div>
<div class="lrow" style="top:110px"><svg class="key" width="12" height="18"><use href="#i-key"/></svg><span class="lt" style="letter-spacing:0.433px">НастройкаНачисленияЗарплатыОбщиеДанные</span><svg class="lock" width="20" height="18"><use href="#i-lock"/></svg></div>
<div class="lrow" style="top:132px"><svg class="key" width="12" height="18"><use href="#i-key"/></svg><span class="lt" style="letter-spacing:0.648px">НастройкаПерсУчета</span><svg class="lock" width="20" height="18"><use href="#i-lock"/></svg></div>
<div class="lrow" style="top:154px"><svg class="key" width="12" height="18"><use href="#i-key"/></svg><span class="lt" style="letter-spacing:0.464px">НастройкаПерсУчетаОбщиеДанные</span><svg class="lock" width="20" height="18"><use href="#i-lock"/></svg></div>
<div class="lrow" style="top:176px"><svg class="key" width="12" height="18"><use href="#i-key"/></svg><span class="lt" style="letter-spacing:0.555px">НастройкаСинхронизацииСЕГАИС</span><svg class="lock" width="20" height="18"><use href="#i-lock"/></svg></div>
<div class="lrow" style="top:198px"><svg class="key" width="12" height="18"><use href="#i-key"/></svg><span class="lt" style="letter-spacing:0.593px">НастройкаСинхронизацииФайлов</span><svg class="lock" width="20" height="18"><use href="#i-lock"/></svg></div>
<div class="lrow" style="top:220px"><svg class="key" width="12" height="18"><use href="#i-key"/></svg><span class="lt" style="letter-spacing:0.444px">НастройкиОбменаГИСМ</span><svg class="lock" width="20" height="18"><use href="#i-lock"/></svg></div>
<div class="lrow" style="top:242px"><svg class="key" width="12" height="18"><use href="#i-key"/></svg><span class="lt" style="letter-spacing:0.515px">ОбновлениеКонфигурацииБазыДанных</span><svg class="lock" width="20" height="18"><use href="#i-lock"/></svg></div>
<div class="lrow" style="top:264px"><svg class="key" width="12" height="18"><use href="#i-key"/></svg><span class="lt" style="letter-spacing:0.687px">ОператорОтправкиОтчетностиЧерезПредставителя</span><svg class="lock" width="20" height="18"><use href="#i-lock"/></svg></div>
<div class="lrow" style="top:286px"><svg class="key" width="12" height="18"><use href="#i-key"/></svg><span class="lt" style="letter-spacing:0.596px">ОператорОтправкиОтчетностиЧерезПредставителяПереоп...</span><svg class="lock" width="20" height="18"><use href="#i-lock"/></svg></div>
<div class="lrow" style="top:308px"><svg class="key" width="12" height="18"><use href="#i-key"/></svg><span class="lt" style="letter-spacing:0.45px">ОтправкаSMS</span><svg class="lock" width="20" height="18"><use href="#i-lock"/></svg></div>
<div class="lrow" style="top:330px"><svg class="key" width="12" height="18"><use href="#i-key"/></svg><span class="lt" style="letter-spacing:0.601px">ОтражениеЗарплатыВБухгалтерскомУчете</span><svg class="lock" width="20" height="18"><use href="#i-lock"/></svg></div>
<div class="lrow" style="top:352px"><svg class="key" width="12" height="18"><use href="#i-key"/></svg><span class="lt" style="letter-spacing:0.464px">ПередачаДанныхАнонимныйДоступ</span><svg class="lock" width="20" height="18"><use href="#i-lock"/></svg></div>
<div class="lrow" style="top:374px"><svg class="key" width="12" height="18"><use href="#i-key"/></svg><span class="lt" style="letter-spacing:0.667px">ПодключениеИнтернетПоддержки</span><svg class="lock" width="20" height="18"><use href="#i-lock"/></svg></div>
<div class="lrow" style="top:396px"><svg class="key" width="12" height="18"><use href="#i-key"/></svg><span class="lt" style="letter-spacing:0.532px">ПодключениеСервисовСопровождения</span><svg class="lock" width="20" height="18"><use href="#i-lock"/></svg></div>
<div class="lrow" style="top:418px"><svg class="key" width="12" height="18"><use href="#i-key"/></svg><span class="lt" style="letter-spacing:0.525px">ПодсистемаБанкИКасса</span><svg class="lock" width="20" height="18"><use href="#i-lock"/></svg></div>
<div class="lrow" style="top:440px"><svg class="key" width="12" height="18"><use href="#i-key"/></svg><span class="lt" style="letter-spacing:0.564px">ПодсистемаПродажи</span><svg class="lock" width="20" height="18"><use href="#i-lock"/></svg></div>
<div class="lrow" style="top:462px"><svg class="key" width="12" height="18"><use href="#i-key"/></svg><span class="lt" style="letter-spacing:0.429px">ПодсистемаСклад</span><svg class="lock" width="20" height="18"><use href="#i-lock"/></svg></div>
<div class="lrow" style="top:484px"><svg class="key" width="12" height="18"><use href="#i-key"/></svg><span class="lt" style="letter-spacing:0.65px">ПодсистемаСправочники</span><svg class="lock" width="20" height="18"><use href="#i-lock"/></svg></div>
<div class="lrow" style="top:506px"><svg class="key" width="12" height="18"><use href="#i-key"/></svg><span class="lt sel" style="letter-spacing:0.35px">ПолныеПрава</span><svg class="lock" width="20" height="18"><use href="#i-lock"/></svg></div>
<div class="lrow" style="top:528px"><svg class="key" width="12" height="18"><use href="#i-key"/></svg><span class="lt" style="letter-spacing:0.621px">ПолучениеОбновленийКлассификаторов</span><svg class="lock" width="20" height="18"><use href="#i-lock"/></svg></div>
<div class="lrow" style="top:550px"><svg class="key" width="12" height="18"><use href="#i-key"/></svg><span class="lt" style="letter-spacing:0.473px">ПолучениеПлатежнойСсылкиДляЯндексКассы</span><svg class="lock" width="20" height="18"><use href="#i-lock"/></svg></div>
<div class="lrow" style="top:572px"><svg class="key" width="12" height="18"><use href="#i-key"/></svg><span class="lt" style="letter-spacing:0.605px">ПостановкаКонтрагентовНаМониторингСПАРКРиски</span><svg class="lock" width="20" height="18"><use href="#i-lock"/></svg></div>
<div class="lrow" style="top:594px"><svg class="key" width="12" height="18"><use href="#i-key"/></svg><span class="lt" style="letter-spacing:0.627px">ПравоИнтерактивногоПереносаГраницыПоследовательности</span><svg class="lock" width="20" height="18"><use href="#i-lock"/></svg></div>
<div class="lrow" style="top:616px"><svg class="key" width="12" height="18"><use href="#i-key"/></svg><span class="lt" style="letter-spacing:0.36px">ПравоНаЗащищенныйДокументооборотСКонтролирующими...</span><svg class="lock" width="20" height="18"><use href="#i-lock"/></svg></div>
<div class="lrow" style="top:638px"><svg class="key" width="12" height="18"><use href="#i-key"/></svg><span class="lt" style="letter-spacing:0.68px">ПросмотрЖурналаРегистрации</span><svg class="lock" width="20" height="18"><use href="#i-lock"/></svg></div>
<div class="lrow" style="top:660px"><svg class="key" width="12" height="18"><use href="#i-key"/></svg><span class="lt" style="letter-spacing:0.405px">ПросмотрИнформацииОДоступныхОбновленияхПрограммы</span><svg class="lock" width="20" height="18"><use href="#i-lock"/></svg></div>
<div class="lrow" style="top:682px"><svg class="key" width="12" height="18"><use href="#i-key"/></svg><span class="lt" style="letter-spacing:0.485px">ПросмотрОписанияИзмененийПрограммы</span><svg class="lock" width="20" height="18"><use href="#i-lock"/></svg></div>
<div class="lrow" style="top:704px"><svg class="key" width="12" height="18"><use href="#i-key"/></svg><span class="lt" style="letter-spacing:0.548px">ПросмотрОтчетаАнализРасхожденийПриПоступленииАлког...</span><svg class="lock" width="20" height="18"><use href="#i-lock"/></svg></div>
<div class="lrow" style="top:726px"><svg class="key" width="12" height="18"><use href="#i-key"/></svg><span class="lt" style="letter-spacing:0.483px">ПросмотрОтчетаВаловаяПрибыль</span><svg class="lock" width="20" height="18"><use href="#i-lock"/></svg></div>
<div class="lrow" style="top:748px"><svg class="key" width="12" height="18"><use href="#i-key"/></svg><span class="lt" style="letter-spacing:0.561px">ПросмотрОтчетаДвиженияМеждуРегистрамиЕГАИС</span><svg class="lock" width="20" height="18"><use href="#i-lock"/></svg></div>
<div class="lrow" style="top:770px"><svg class="key" width="12" height="18"><use href="#i-key"/></svg><span class="lt" style="letter-spacing:0px"> </span><svg class="lock" width="20" height="18"><use href="#i-lock"/></svg></div>
<div class="vsb" style="left:546px;top:0;width:20px;height:776px">
 <div class="sbtn up" style="top:0"><svg style="left:5px;top:7px" width="9" height="9"><use href="#i-sup"/></svg></div>
 <div class="sthumb" style="top:349px;height:66px"></div>
 <div class="sbtn dn" style="top:750px"><svg style="left:5px;top:10px" width="9" height="9"><use href="#i-sdn"/></svg></div>
</div>
</div>
<div id="split"></div>

<div id="rtop"></div><div id="rleft"></div><div id="rright"></div><div id="rbot"></div>
<div id="rform">
 <div id="rtb"><span style="left:4px;top:7px;font-size:12.4px;line-height:16px;color:#2A1A00">Действия</span>
 <svg style="left:69px;top:11px;fill:#3D2B00" width="8" height="5"><use href="#i-dn"/></svg>
 <div class="sep" style="left:81px;top:3px;height:22px"></div>
 <svg style="left:87px;top:3px" width="21" height="20"><use href="#i-funnel"/></svg>
 </div>
 <div id="tabpanel"></div>
 <div class="tab" id="tab1"><span style="left:9px;top:3px;letter-spacing:.4px">Права</span></div>
 <div class="tab" id="tab2"><span style="left:9px;top:3px;letter-spacing:-.08px">Шаблоны ограничений</span></div>

 <span class="lbl" style="left:15px;top:74px;letter-spacing:-.15px">Объекты:</span>
 <div class="box" style="left:15px;top:96px;width:667px;height:612px">
<div class="trow" style="top:1px"><svg class="plus" width="13" height="13"><use href="#i-plus"/></svg><svg class="tbl" width="17" height="16"><use href="#i-tbl"/></svg><span class="tt" style="letter-spacing:0.304px">НазначениеЦелевыхСредств</span></div>
<div class="trow" style="top:23px"><svg class="plus" width="13" height="13"><use href="#i-plus"/></svg><svg class="tbl" width="17" height="16"><use href="#i-tbl"/></svg><span class="tt" style="letter-spacing:0.5px">НазначенияИспользования</span></div>
<div class="trow" style="top:45px"><svg class="plus" width="13" height="13"><use href="#i-plus"/></svg><svg class="tbl" width="17" height="16"><use href="#i-tbl"/></svg><span class="tt" style="letter-spacing:0.251px">НалоговыеОрганы</span></div>
<div class="trow" style="top:67px"><svg class="plus" width="13" height="13"><use href="#i-plus"/></svg><svg class="tbl" width="17" height="16"><use href="#i-tbl"/></svg><span class="tt" style="letter-spacing:0.316px">НаправленияИспользованияПрибыли</span></div>
<div class="trow" style="top:89px"><svg class="plus" width="13" height="13"><use href="#i-plus"/></svg><svg class="tbl" width="17" height="16"><use href="#i-tbl"/></svg><span class="tt" style="letter-spacing:0.36px">НаправленияСдачиОтчетности</span></div>
<div class="trow" style="top:111px"><svg class="plus" width="13" height="13"><use href="#i-plus"/></svg><svg class="tbl" width="17" height="16"><use href="#i-tbl"/></svg><span class="tt" style="letter-spacing:0.286px">НастройкиЗагрузкиДанныхВнешнихСистем</span></div>
<div class="trow" style="top:133px"><svg class="plus" width="13" height="13"><use href="#i-plus"/></svg><svg class="tbl" width="17" height="16"><use href="#i-tbl"/></svg><span class="tt" style="letter-spacing:0.38px">НастройкиИнтеграцииCRM</span></div>
<div class="trow" style="top:155px"><svg class="plus" width="13" height="13"><use href="#i-plus"/></svg><svg class="tbl" width="17" height="16"><use href="#i-tbl"/></svg><span class="tt" style="letter-spacing:0.365px">НастройкиИнтеграцииСБанками</span></div>
<div class="trow" style="top:177px"><svg class="plus" width="13" height="13"><use href="#i-plus"/></svg><svg class="tbl" width="17" height="16"><use href="#i-tbl"/></svg><span class="tt" style="letter-spacing:0.238px">НастройкиОбменСБанками</span></div>
<div class="trow" style="top:199px"><svg class="plus" width="13" height="13"><use href="#i-plus"/></svg><svg class="tbl" width="17" height="16"><use href="#i-tbl"/></svg><span class="tt" style="letter-spacing:0.272px">НастройкиЭДО</span></div>
<div class="trow" style="top:221px"><svg class="plus" width="13" height="13"><use href="#i-plus"/></svg><svg class="tbl" width="17" height="16"><use href="#i-tbl"/></svg><span class="tt" style="letter-spacing:0.315px">НастройкиЯндексКассы</span></div>
<div class="trow" style="top:243px"><svg class="plus" width="13" height="13"><use href="#i-plus"/></svg><svg class="tbl" width="17" height="16"><use href="#i-tbl"/></svg><span class="tt" style="letter-spacing:0.291px">НачислениеЗарплатыПрисоединенныеФайлы</span></div>
<div class="trow" style="top:265px"><svg class="plus" width="13" height="13"><use href="#i-plus"/></svg><svg class="tbl" width="17" height="16"><use href="#i-tbl"/></svg><span class="tt" style="letter-spacing:0.289px">НачислениеОценочныхОбязательствПоОтпускамПрисоединенныеФайлы</span></div>
<div class="trow" style="top:287px"><svg class="plus" width="13" height="13"><use href="#i-plus"/></svg><svg class="tbl" width="17" height="16"><use href="#i-tbl"/></svg><span class="tt" style="letter-spacing:0.262px">НематериальныеАктивы</span></div>
<div class="trow" style="top:309px"><svg class="plus" width="13" height="13"><use href="#i-plus"/></svg><svg class="tbl" width="17" height="16"><use href="#i-tbl"/></svg><span class="tt" style="letter-spacing:0.584px">Новости</span></div>
<div class="trow" style="top:331px"><svg class="plus" width="13" height="13"><use href="#i-plus"/></svg><svg class="tbl" width="17" height="16"><use href="#i-tbl"/></svg><span class="tt tsel" style="letter-spacing:0.228px">Номенклатура</span></div>
<div class="trow" style="top:353px"><svg class="plus" width="13" height="13"><use href="#i-plus"/></svg><svg class="tbl" width="17" height="16"><use href="#i-tbl"/></svg><span class="tt" style="letter-spacing:0.34px">НоменклатураПоставщиков</span></div>
<div class="trow" style="top:375px"><svg class="plus" width="13" height="13"><use href="#i-plus"/></svg><svg class="tbl" width="17" height="16"><use href="#i-tbl"/></svg><span class="tt" style="letter-spacing:0.368px">НоменклатурныеГруппы</span></div>
<div class="trow" style="top:397px"><svg class="plus" width="13" height="13"><use href="#i-plus"/></svg><svg class="tbl" width="17" height="16"><use href="#i-tbl"/></svg><span class="tt" style="letter-spacing:0.125px">НомераГТД</span></div>
<div class="trow" style="top:419px"><svg class="plus" width="13" height="13"><use href="#i-plus"/></svg><svg class="tbl" width="17" height="16"><use href="#i-tbl"/></svg><span class="tt" style="letter-spacing:0.2px">ОбщероссийскийКлассификаторОсновныхФондов</span></div>
<div class="trow" style="top:441px"><svg class="plus" width="13" height="13"><use href="#i-plus"/></svg><svg class="tbl" width="17" height="16"><use href="#i-tbl"/></svg><span class="tt" style="letter-spacing:0.287px">ОбщероссийскийКлассификаторПродукции</span></div>
<div class="trow" style="top:463px"><svg class="plus" width="13" height="13"><use href="#i-plus"/></svg><svg class="tbl" width="17" height="16"><use href="#i-tbl"/></svg><span class="tt" style="letter-spacing:0.047px">ОбщиеВнешниеКомпоненты</span></div>
<div class="trow" style="top:485px"><svg class="plus" width="13" height="13"><use href="#i-plus"/></svg><svg class="tbl" width="17" height="16"><use href="#i-tbl"/></svg><span class="tt" style="letter-spacing:0.128px">ОбщиеДанныеИнформационногоЦентра</span></div>
<div class="trow" style="top:507px"><svg class="plus" width="13" height="13"><use href="#i-plus"/></svg><svg class="tbl" width="17" height="16"><use href="#i-tbl"/></svg><span class="tt" style="letter-spacing:0.356px">ОбъектыСтатистическогоНаблюдения</span></div>
<div class="trow" style="top:529px"><svg class="plus" width="13" height="13"><use href="#i-plus"/></svg><svg class="tbl" width="17" height="16"><use href="#i-tbl"/></svg><span class="tt" style="letter-spacing:0.263px">ОбъектыСтроительства</span></div>
<div class="trow" style="top:551px"><svg class="plus" width="13" height="13"><use href="#i-plus"/></svg><svg class="tbl" width="17" height="16"><use href="#i-tbl"/></svg><span class="tt" style="letter-spacing:0.207px">ОперацияБухПрисоединенныеФайлы</span></div>
<div class="trow" style="top:573px"><svg class="plus" width="13" height="13"><use href="#i-plus"/></svg><svg class="tbl" width="17" height="16"><use href="#i-tbl"/></svg><span class="tt" style="letter-spacing:0.329px">ОперацияНалоговогоУчетаПоНДФЛПрисоединенныеФайлы</span></div>
<div class="trow" style="top:595px"><svg class="plus" width="13" height="13"><use href="#i-plus"/></svg><svg class="tbl" width="17" height="16"><use href="#i-tbl"/></svg><span class="tt" style="letter-spacing:0.237px">ОперацияУчетаПоСтраховымВзносамПрисоединенныеФайлы</span></div>
  <div class="vsb" style="left:645px;top:0;width:20px;height:610px">
   <div class="sbtn up" style="top:0"><svg style="left:5px;top:7px" width="9" height="9"><use href="#i-sup"/></svg></div>
   <div class="sthumb" style="top:202px;height:35px"></div>
   <div class="sbtn dn" style="top:584px"><svg style="left:5px;top:10px" width="9" height="9"><use href="#i-sdn"/></svg></div>
  </div>
 </div>

 <svg style="left:1272px;top:69px" width="20" height="20" viewBox="0 0 20 20"><rect x="6" y=".500" width="13" height="13" rx="1.500" fill="#C3CCD5" stroke="#B9C3CD" stroke-width=".6"/><rect x="3.500" y="3" width="13" height="13" rx="1.500" fill="#C9D2DB" stroke="#B9C3CD" stroke-width=".6"/><rect x=".500" y="6" width="13" height="13" rx="1.500" fill="#CDD5DC" stroke="#BAC4CE" stroke-width=".8"/><rect x="2.500" y="8" width="9" height="9" fill="#D8E2EC"/><path d="M2.500 11.500l3.500 4 8-9" fill="none" stroke="#A9C19B" stroke-width="2.400"/></svg>
 <svg style="left:1299px;top:69px" width="20" height="20" viewBox="0 0 20 20"><rect x="6" y=".500" width="13" height="13" rx="1.500" fill="#C3CCD5" stroke="#B9C3CD" stroke-width=".6"/><rect x="3.500" y="3" width="13" height="13" rx="1.500" fill="#C9D2DB" stroke="#B9C3CD" stroke-width=".6"/><rect x=".500" y="6" width="13" height="13" rx="1.500" fill="#CDD5DC" stroke="#BAC4CE" stroke-width=".8"/><rect x="2.500" y="8" width="9" height="9" fill="#D3E0EE"/></svg>
 <svg style="left:1212px;top:396px" width="20" height="20" viewBox="0 0 20 20"><circle cx="10" cy="10" r="9.600" fill="#BBD1B6" stroke="#B5C8BC" stroke-width=".8"/><path d="M5 10h10M10 5v10" stroke="#D9E3D5" stroke-width="2.200"/></svg>
 <svg style="left:1241px;top:398px" width="16" height="16" viewBox="0 0 16 16"><path d="M10.500 .500l4.500 4-9 9.500-5.500 1.500 1-5.500z" fill="#9DB89B"/><path d="M1.500 10l4.500 4-5.500 1.500z" fill="#C9D9C5"/></svg>
 <svg style="left:1268px;top:399px" width="15" height="15" viewBox="0 0 15 15"><path d="M2 2l11 11M13 2l-11 11" stroke="#D4C0C1" stroke-width="3" stroke-linecap="round"/></svg>
 <div class="sep" style="left:1291px;top:396px;height:22px"></div>
 <svg style="left:1298px;top:396px" width="19" height="19" viewBox="0 0 19 19"><rect x="3" y="3.500" width="14" height="13.500" rx="1.500" fill="#FBF8EA" stroke="#D2CBB8" stroke-width="1.600"/><path d="M5.500 8h4M11 8h4.500M5.500 11h4M11 11h4.500M5.500 14h4M11 14h4.500" stroke="#D6CDBC" stroke-width="1.500"/><path d="M3.500 .500l8 7-1 2.500-3-.500-7-6z" fill="#9DB89B"/></svg>
 <span class="lbl" style="left:690px;top:74px">Права:</span>
 <div class="box" style="left:688px;top:96px;width:635px;height:287px">
<div class="rrow rsel" style="top:0px"><svg class="chk" width="11" height="10"><use href="#i-chk"/></svg><span class="rt" style="letter-spacing:0.2px">Чтение</span></div>
<div class="rrow" style="top:22px"><svg class="chk" width="11" height="10"><use href="#i-chk"/></svg><span class="rt" style="letter-spacing:0.224px">Добавление</span></div>
<div class="rrow" style="top:44px"><svg class="chk" width="11" height="10"><use href="#i-chk"/></svg><span class="rt" style="letter-spacing:0.25px">Изменение</span></div>
<div class="rrow" style="top:66px"><svg class="chk" width="11" height="10"><use href="#i-chk"/></svg><span class="rt" style="letter-spacing:0.215px">Удаление</span></div>
<div class="rrow" style="top:88px"><svg class="chk" width="11" height="10"><use href="#i-chk"/></svg><span class="rt" style="letter-spacing:0.072px">Просмотр</span></div>
<div class="rrow" style="top:110px"><svg class="chk" width="11" height="10"><use href="#i-chk"/></svg><span class="rt" style="letter-spacing:0.109px">Интерактивное добавление</span></div>
<div class="rrow" style="top:132px"><svg class="chk" width="11" height="10"><use href="#i-chk"/></svg><span class="rt" style="letter-spacing:0.192px">Редактирование</span></div>
<div class="rrow" style="top:154px"><span class="rt" style="letter-spacing:0.096px">Интерактивное удаление</span></div>
<div class="rrow" style="top:176px"><svg class="chk" width="11" height="10"><use href="#i-chk"/></svg><span class="rt" style="letter-spacing:-0.017px">Интерактивная пометка на удаление</span></div>
<div class="rrow" style="top:198px"><svg class="chk" width="11" height="10"><use href="#i-chk"/></svg><span class="rt" style="letter-spacing:-0.042px">Интерактивное снятие пометки удаления</span></div>
<div class="rrow" style="top:220px"><svg class="chk" width="11" height="10"><use href="#i-chk"/></svg><span class="rt" style="letter-spacing:0.031px">Интерактивное удаление помеченных</span></div>
<div class="rrow" style="top:242px"><svg class="chk" width="11" height="10"><use href="#i-chk"/></svg><span class="rt" style="letter-spacing:-0.039px">Ввод по строке</span></div>
<div class="rrow" style="top:264px"><span class="rt" style="letter-spacing:0.015px">Интерактивное удаление предопределенных</span></div>
  <div class="vsb" style="left:613px;top:0;width:20px;height:285px">
   <div class="sbtn up" style="top:0"><svg style="left:5px;top:7px" width="9" height="9"><use href="#i-supd"/></svg></div>
   <div class="sthumb" style="top:25px;height:107px"></div>
   <div class="sbtn dn" style="top:259px"><svg style="left:5px;top:10px" width="9" height="9"><use href="#i-sdn"/></svg></div>
  </div>
 </div>

 <span class="lbl" style="left:688px;top:405px;color:#B5A072;letter-spacing:-0.12px">Ограничения доступа к данным:</span>
 <div class="box" style="left:688px;top:423px;width:635px;height:285px">
  <div class="th" style="left:0;width:317px">Поля</div>
  <div class="th" style="left:317px;width:316px">Ограничение доступа</div>
 </div>

 <span class="lbl" style="left:33px;top:714px;letter-spacing:-.22px">Описани...</span>
 <span class="lbl" style="left:106px;top:714px">Право на чтение</span>
 <span class="lbl" style="left:106px;top:730px">(Чтение)</span>

 <div class="cb" style="left:7px;top:768px"><svg width="11" height="9" viewBox="0 0 11 9"><path d="M1 4.500l3 3L10 .8" fill="none" stroke="#D2D0C4" stroke-width="2.200"/></svg></div><span class="cbl" style="left:25px;top:769px">Устанавливать права для новых объектов</span>
 <div class="cb" style="left:7px;top:793px"><svg width="11" height="9" viewBox="0 0 11 9"><path d="M1 4.500l3 3L10 .8" fill="none" stroke="#D2D0C4" stroke-width="2.200"/></svg></div><span class="cbl" style="left:25px;top:794px">Устанавливать права для реквизитов и табличных частей по умолчанию</span>
 <div class="cb" style="left:7px;top:819px"></div><span class="cbl" style="left:25px;top:819px">Независимые права подчиненных объектов</span>
</div>
<div id="bottom"></div><div id="btab"></div>

</body></html>
